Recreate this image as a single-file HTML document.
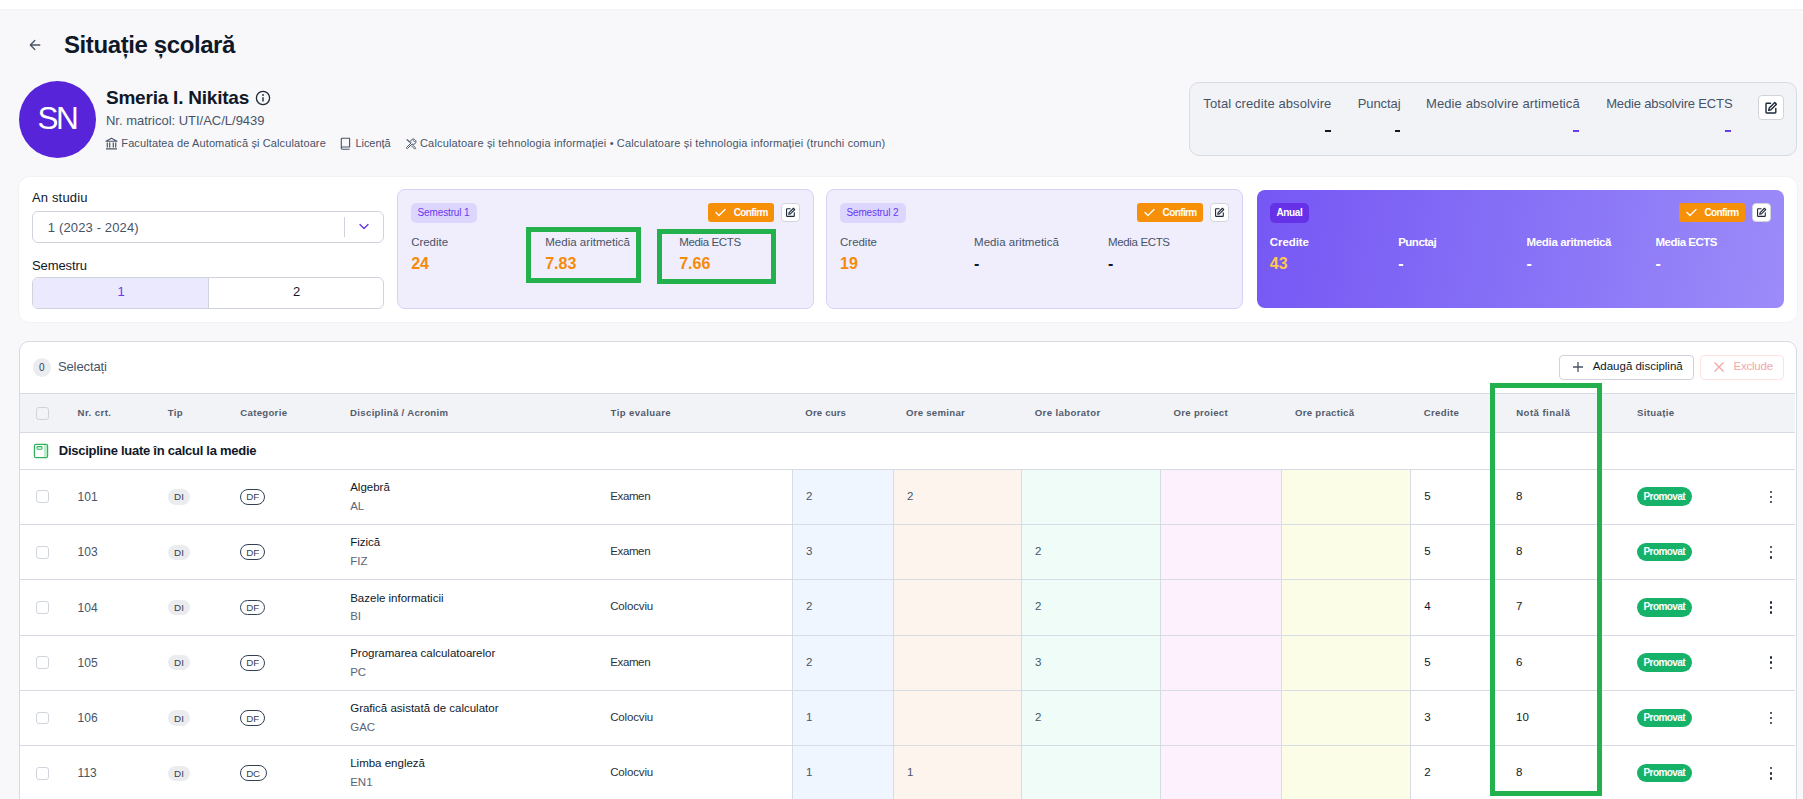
<!DOCTYPE html>
<html><head><meta charset="utf-8"><style>
html,body{margin:0;padding:0;}
body{width:1803px;height:799px;overflow:hidden;position:relative;background:#f8f8fb;font-family:"Liberation Sans",sans-serif;}
body div,body svg{position:absolute;}
.t{white-space:nowrap;}
</style></head><body>
<div style="left:0px;top:0px;width:1803px;height:9px;background:#fff;box-shadow:0 0.5px 0.5px rgba(16,24,40,0.025)"></div>
<svg style="left:29px;top:39px" width="12" height="12" viewBox="0 0 12 12"><path d="M10.8 6H1.5M5.8 1.5L1.3 6l4.5 4.5" fill="none" stroke="#475467" stroke-width="1.3" stroke-linecap="round" stroke-linejoin="round"/></svg>
<div class="t" style="left:64.00px;top:33.48px;font-size:24px;line-height:24px;color:#101828;font-weight:bold;letter-spacing:-0.401px;">Situație școlară</div>
<div style="left:19px;top:81px;width:77px;height:77px;background:#5724d9;border-radius:50%"></div>
<div class="t" style="left:37.60px;top:102.74px;font-size:31.5px;line-height:31.5px;color:#fff;letter-spacing:-2.529px;">SN</div>
<div class="t" style="left:106.00px;top:87.52px;font-size:19px;line-height:19px;color:#101828;font-weight:bold;letter-spacing:-0.223px;">Smeria I. Nikitas</div>
<svg style="left:255px;top:90px" width="16" height="16" viewBox="0 0 16 16"><circle cx="8" cy="8" r="6.6" fill="none" stroke="#1d2939" stroke-width="1.3"/><circle cx="8" cy="5" r="0.9" fill="#1d2939"/><path d="M8 7.2v4.3" stroke="#1d2939" stroke-width="1.4"/></svg>
<div class="t" style="left:106.00px;top:114.00px;font-size:13px;line-height:13px;color:#475467;letter-spacing:-0.016px;">Nr. matricol: UTI/AC/L/9439</div>
<svg style="left:105px;top:137px" width="13" height="13" viewBox="0 0 13 13"><path d="M1 4.2L6.5 1.3 12 4.2z" fill="none" stroke="#475467" stroke-width="1.1" stroke-linejoin="round"/><path d="M2.3 5.5v5M4.7 5.5v5M8.3 5.5v5M10.7 5.5v5M1 11.8h11" stroke="#475467" stroke-width="1.2"/></svg>
<div class="t" style="left:121.30px;top:137.99px;font-size:11px;line-height:11px;color:#475467;letter-spacing:0.116px;">Facultatea de Automatică și Calculatoare</div>
<svg style="left:339px;top:137px" width="13" height="13" viewBox="0 0 13 13"><path d="M2.3 11.2V2.2c0-.6.4-1 1-1h7.3v8.8H3.3c-.6 0-1 .5-1 1.1s.4 1.1 1 1.1h7.3" fill="none" stroke="#475467" stroke-width="1.1" stroke-linejoin="round"/></svg>
<div class="t" style="left:355.50px;top:137.99px;font-size:11px;line-height:11px;color:#475467;letter-spacing:-0.067px;">Licență</div>
<svg style="left:404.5px;top:138.3px" width="12" height="12" viewBox="0 0 12 12"><path d="M1.6 9.4L6 5A2.7 2.7 0 0 1 9.6 1.3L8.3 2.6 9.4 3.7 10.7 2.4A2.7 2.7 0 0 1 7 6L2.6 10.4A.7.7 0 0 1 1.6 9.4z" fill="none" stroke="#475467" stroke-width=".95" stroke-linejoin="round"/><path d="M1.2 1.9l.7-.7 1 .4 2.4 2.4-.8.8L2.1 2.4z" fill="#475467"/><path d="M7.4 6.6l3.1 3.1a.8.8 0 0 1-1.1 1.1L6.3 7.7" fill="none" stroke="#475467" stroke-width=".95" stroke-linejoin="round"/></svg>
<div class="t" style="left:420.00px;top:137.99px;font-size:11px;line-height:11px;color:#475467;letter-spacing:0.159px;">Calculatoare și tehnologia informației • Calculatoare și tehnologia informației (trunchi comun)</div>
<div style="left:1189px;top:82px;width:608px;height:74px;background:#f2f3f7;border:1px solid #d7dbe3;border-radius:10px;box-sizing:border-box"></div>
<div class="t" style="left:1203.30px;top:97.30px;font-size:13px;line-height:13px;color:#475467;letter-spacing:0.103px;">Total credite absolvire</div>
<div class="t" style="left:1357.70px;top:97.30px;font-size:13px;line-height:13px;color:#475467;letter-spacing:-0.080px;">Punctaj</div>
<div class="t" style="left:1426.00px;top:97.30px;font-size:13px;line-height:13px;color:#475467;letter-spacing:0.108px;">Medie absolvire artimetică</div>
<div class="t" style="left:1606.20px;top:97.30px;font-size:13px;line-height:13px;color:#475467;letter-spacing:-0.156px;">Medie absolvire ECTS</div>
<div style="left:1324.8px;top:129.5px;width:5.8px;height:2px;background:#101828"></div>
<div style="left:1394.7px;top:129.5px;width:5.8px;height:2px;background:#101828"></div>
<div style="left:1572.8px;top:129.5px;width:6.2px;height:2px;background:#6938ef"></div>
<div style="left:1725px;top:129.5px;width:6.3px;height:2px;background:#6938ef"></div>
<div style="left:1758px;top:95px;width:25.5px;height:25.2px;background:#fff;border:1px solid #d0d5dd;border-radius:4px;box-sizing:border-box"><svg width="14" height="14" viewBox="0 0 16 16" style="position:absolute;left:4.75px;top:4.6px"><path d="M7.5 2.5H3.2c-.5 0-.9.4-.9.9v9.4c0 .5.4.9.9.9h9.4c.5 0 .9-.4.9-.9V8.5" fill="none" stroke="#1d2939" stroke-width="1.6" stroke-linecap="round"/><path d="M12.3 1.8l1.9 1.9-6.3 6.3-2.5.6.6-2.5z" fill="none" stroke="#1d2939" stroke-width="1.6" stroke-linejoin="round"/></svg></div>
<div style="left:19px;top:177px;width:1777.8px;height:145.3px;background:#fff;border-radius:10px;box-shadow:0 0 0 0.6px rgba(16,24,40,0.045)"></div>
<div class="t" style="left:31.90px;top:191.10px;font-size:13px;line-height:13px;color:#101828;letter-spacing:0.178px;">An studiu</div>
<div style="left:32px;top:211px;width:352px;height:32px;border:1px solid #cfd4dc;border-radius:6px;box-sizing:border-box;background:#fff"></div>
<div class="t" style="left:47.80px;top:221.20px;font-size:13px;line-height:13px;color:#475467;letter-spacing:0.141px;">1 (2023 - 2024)</div>
<div style="left:344px;top:217.3px;width:1px;height:19.6px;background:#cfd4dc"></div>
<svg style="left:358px;top:222px" width="12" height="9" viewBox="0 0 12 9"><path d="M2 2.5l4 4 4-4" fill="none" stroke="#6938ef" stroke-width="1.4" stroke-linecap="round" stroke-linejoin="round"/></svg>
<div class="t" style="left:31.90px;top:258.50px;font-size:13px;line-height:13px;color:#101828;letter-spacing:-0.079px;">Semestru</div>
<div style="left:32px;top:277.4px;width:352.3px;height:31.2px;border:1px solid #cfd4dc;border-radius:6px;box-sizing:border-box;overflow:hidden;background:#fff"><div style="left:0;top:0;width:175px;height:100%;background:#ebe9fd;border-right:1px solid #cfd4dc"></div></div>
<div class="t" style="left:117.60px;top:285.30px;font-size:13px;line-height:13px;color:#6938ef;">1</div>
<div class="t" style="left:293.00px;top:285.30px;font-size:13px;line-height:13px;color:#101828;">2</div>
<div style="left:397.2px;top:189.4px;width:416.5px;height:119.6px;background:#f0edfc;border:1px solid #d8d2f8;border-radius:8px;box-sizing:border-box"></div>
<div style="left:410.9px;top:203.1px;width:65.8px;height:19.6px;background:#dcd6fd;border-radius:5px"></div>
<div class="t" style="left:417.50px;top:207.53px;font-size:10px;line-height:10px;color:#6938ef;letter-spacing:-0.123px;">Semestrul 1</div>
<div style="left:708.2px;top:203px;width:66px;height:19px;background:#f79009;border-radius:3px"><svg style="left:7px;top:5px" width="11" height="9" viewBox="0 0 11 9"><path d="M1 4.5l3 3L10 1.5" fill="none" stroke="#fff" stroke-width="1.3" stroke-linecap="round" stroke-linejoin="round"/></svg></div>
<div class="t" style="left:733.70px;top:207.73px;font-size:10px;line-height:10px;color:#fff;font-weight:bold;letter-spacing:-0.619px;">Confirm</div>
<div style="left:781.2px;top:203px;width:18.5px;height:18.5px;background:#fff;border:1px solid #d0d5dd;border-radius:4px;box-sizing:border-box"><svg width="11" height="11" viewBox="0 0 16 16" style="position:absolute;left:2.75px;top:2.75px"><path d="M7.5 2.5H3.2c-.5 0-.9.4-.9.9v9.4c0 .5.4.9.9.9h9.4c.5 0 .9-.4.9-.9V8.5" fill="none" stroke="#1d2939" stroke-width="1.6" stroke-linecap="round"/><path d="M12.3 1.8l1.9 1.9-6.3 6.3-2.5.6.6-2.5z" fill="none" stroke="#1d2939" stroke-width="1.6" stroke-linejoin="round"/></svg></div>
<div class="t" style="left:411.20px;top:237.27px;font-size:11.5px;line-height:11.5px;color:#475467;letter-spacing:-0.039px;">Credite</div>
<div class="t" style="left:411.20px;top:256.46px;font-size:16px;line-height:16px;color:#f58a07;font-weight:bold;">24</div>
<div class="t" style="left:545.20px;top:237.27px;font-size:11.5px;line-height:11.5px;color:#475467;letter-spacing:0.027px;">Media aritmetică</div>
<div class="t" style="left:545.20px;top:256.46px;font-size:16px;line-height:16px;color:#f58a07;font-weight:bold;">7.83</div>
<div class="t" style="left:679.20px;top:237.27px;font-size:11.5px;line-height:11.5px;color:#475467;letter-spacing:-0.369px;">Media ECTS</div>
<div class="t" style="left:679.20px;top:256.46px;font-size:16px;line-height:16px;color:#f58a07;font-weight:bold;">7.66</div>
<div style="left:826.1px;top:189.4px;width:416.5px;height:119.6px;background:#f0edfc;border:1px solid #d8d2f8;border-radius:8px;box-sizing:border-box"></div>
<div style="left:839.8000000000001px;top:203.1px;width:65.8px;height:19.6px;background:#dcd6fd;border-radius:5px"></div>
<div class="t" style="left:846.40px;top:207.53px;font-size:10px;line-height:10px;color:#6938ef;letter-spacing:-0.123px;">Semestrul 2</div>
<div style="left:1137.1px;top:203px;width:66px;height:19px;background:#f79009;border-radius:3px"><svg style="left:7px;top:5px" width="11" height="9" viewBox="0 0 11 9"><path d="M1 4.5l3 3L10 1.5" fill="none" stroke="#fff" stroke-width="1.3" stroke-linecap="round" stroke-linejoin="round"/></svg></div>
<div class="t" style="left:1162.60px;top:207.73px;font-size:10px;line-height:10px;color:#fff;font-weight:bold;letter-spacing:-0.619px;">Confirm</div>
<div style="left:1210.1px;top:203px;width:18.5px;height:18.5px;background:#fff;border:1px solid #d0d5dd;border-radius:4px;box-sizing:border-box"><svg width="11" height="11" viewBox="0 0 16 16" style="position:absolute;left:2.75px;top:2.75px"><path d="M7.5 2.5H3.2c-.5 0-.9.4-.9.9v9.4c0 .5.4.9.9.9h9.4c.5 0 .9-.4.9-.9V8.5" fill="none" stroke="#1d2939" stroke-width="1.6" stroke-linecap="round"/><path d="M12.3 1.8l1.9 1.9-6.3 6.3-2.5.6.6-2.5z" fill="none" stroke="#1d2939" stroke-width="1.6" stroke-linejoin="round"/></svg></div>
<div class="t" style="left:840.10px;top:237.27px;font-size:11.5px;line-height:11.5px;color:#475467;letter-spacing:-0.039px;">Credite</div>
<div class="t" style="left:840.10px;top:256.46px;font-size:16px;line-height:16px;color:#f58a07;font-weight:bold;">19</div>
<div class="t" style="left:974.10px;top:237.27px;font-size:11.5px;line-height:11.5px;color:#475467;letter-spacing:0.027px;">Media aritmetică</div>
<div class="t" style="left:974.10px;top:256.46px;font-size:16px;line-height:16px;color:#101828;font-weight:bold;">-</div>
<div class="t" style="left:1108.10px;top:237.27px;font-size:11.5px;line-height:11.5px;color:#475467;letter-spacing:-0.369px;">Media ECTS</div>
<div class="t" style="left:1108.10px;top:256.46px;font-size:16px;line-height:16px;color:#101828;font-weight:bold;">-</div>
<div style="left:1256.8px;top:189.9px;width:527.6px;height:118px;background:linear-gradient(100deg,#7657f4 0%,#8a76f7 60%,#9c8cf9 100%);border-radius:8px"></div>
<div style="left:1270px;top:203.1px;width:39px;height:19.5px;background:#6532e8;border-radius:5px"></div>
<div class="t" style="left:1276.50px;top:207.53px;font-size:10px;line-height:10px;color:#fff;font-weight:bold;letter-spacing:-0.356px;">Anual</div>
<div style="left:1679px;top:203px;width:66px;height:19px;background:#f79009;border-radius:3px"><svg style="left:7px;top:5px" width="11" height="9" viewBox="0 0 11 9"><path d="M1 4.5l3 3L10 1.5" fill="none" stroke="#fff" stroke-width="1.3" stroke-linecap="round" stroke-linejoin="round"/></svg></div>
<div class="t" style="left:1704.50px;top:207.73px;font-size:10px;line-height:10px;color:#fff;font-weight:bold;letter-spacing:-0.619px;">Confirm</div>
<div style="left:1752px;top:203px;width:18.5px;height:18.5px;background:#fff;border:1px solid #d0d5dd;border-radius:4px;box-sizing:border-box"><svg width="11" height="11" viewBox="0 0 16 16" style="position:absolute;left:2.75px;top:2.75px"><path d="M7.5 2.5H3.2c-.5 0-.9.4-.9.9v9.4c0 .5.4.9.9.9h9.4c.5 0 .9-.4.9-.9V8.5" fill="none" stroke="#1d2939" stroke-width="1.6" stroke-linecap="round"/><path d="M12.3 1.8l1.9 1.9-6.3 6.3-2.5.6.6-2.5z" fill="none" stroke="#1d2939" stroke-width="1.6" stroke-linejoin="round"/></svg></div>
<div class="t" style="left:1269.80px;top:237.27px;font-size:11.5px;line-height:11.5px;color:#fff;font-weight:bold;letter-spacing:-0.089px;">Credite</div>
<div class="t" style="left:1269.80px;top:256.46px;font-size:16px;line-height:16px;color:#fec84b;font-weight:bold;">43</div>
<div class="t" style="left:1398.20px;top:237.27px;font-size:11.5px;line-height:11.5px;color:#fff;font-weight:bold;letter-spacing:-0.505px;">Punctaj</div>
<div class="t" style="left:1398.20px;top:256.46px;font-size:16px;line-height:16px;color:#fff;font-weight:bold;">-</div>
<div class="t" style="left:1526.60px;top:237.27px;font-size:11.5px;line-height:11.5px;color:#fff;font-weight:bold;letter-spacing:-0.351px;">Media aritmetică</div>
<div class="t" style="left:1526.60px;top:256.46px;font-size:16px;line-height:16px;color:#fff;font-weight:bold;">-</div>
<div class="t" style="left:1655.40px;top:237.27px;font-size:11.5px;line-height:11.5px;color:#fff;font-weight:bold;letter-spacing:-0.486px;">Media ECTS</div>
<div class="t" style="left:1655.40px;top:256.46px;font-size:16px;line-height:16px;color:#fff;font-weight:bold;">-</div>
<div style="left:526px;top:227.1px;width:114.8px;height:55.5px;border:5px solid #22b14c;box-sizing:border-box"></div>
<div style="left:657.1px;top:229.2px;width:118.6px;height:54.5px;border:5px solid #22b14c;box-sizing:border-box"></div>
<div style="left:19.4px;top:341.3px;width:1777.6px;height:500px;background:#fff;border:1px solid #d7dbe3;border-radius:10px;box-sizing:border-box"></div>
<div style="left:33px;top:358.2px;width:18.4px;height:18.4px;background:#eaecf0;border-radius:50%"></div>
<div class="t" style="left:39.00px;top:362.74px;font-size:10px;line-height:10px;color:#344054;">0</div>
<div class="t" style="left:57.90px;top:360.30px;font-size:13px;line-height:13px;color:#475467;letter-spacing:-0.096px;">Selectați</div>
<div style="left:1559.4px;top:355px;width:134.5px;height:25px;border:1px solid #cfd4dc;border-radius:4px;box-sizing:border-box;background:#fff"></div>
<svg style="left:1572px;top:361px" width="12" height="12" viewBox="0 0 12 12"><path d="M6 1v10M1 6h10" stroke="#475467" stroke-width="1.3"/></svg>
<div class="t" style="left:1592.70px;top:361.27px;font-size:11.5px;line-height:11.5px;color:#101828;letter-spacing:-0.009px;">Adaugă disciplină</div>
<div style="left:1700.2px;top:355px;width:83.6px;height:25px;border:1px solid #fde2e2;border-radius:4px;box-sizing:border-box;background:#fff"></div>
<svg style="left:1713px;top:361px" width="12" height="12" viewBox="0 0 12 12"><path d="M1.5 1.5l9 9M10.5 1.5l-9 9" stroke="#f4a3a3" stroke-width="1.2"/></svg>
<div class="t" style="left:1733.50px;top:361.27px;font-size:11.5px;line-height:11.5px;color:#f3a7a7;letter-spacing:-0.230px;">Exclude</div>
<div style="left:20.4px;top:393.3px;width:1775px;height:40px;background:#f2f3f7;border-top:1px solid #d7dbe3;border-bottom:1px solid #d7dbe3;box-sizing:border-box"></div>
<div style="left:36.3px;top:407.3px;width:12.4px;height:12.4px;border:1px solid #cfd4dc;border-radius:3px;box-sizing:border-box"></div>
<div class="t" style="left:77.60px;top:408.47px;font-size:9.6px;line-height:9.6px;color:#535c6d;font-weight:bold;letter-spacing:0.423px;">Nr. crt.</div>
<div class="t" style="left:167.70px;top:408.47px;font-size:9.6px;line-height:9.6px;color:#535c6d;font-weight:bold;letter-spacing:0.359px;">Tip</div>
<div class="t" style="left:240.30px;top:408.47px;font-size:9.6px;line-height:9.6px;color:#535c6d;font-weight:bold;letter-spacing:0.302px;">Categorie</div>
<div class="t" style="left:350.10px;top:408.47px;font-size:9.6px;line-height:9.6px;color:#535c6d;font-weight:bold;letter-spacing:0.318px;">Disciplină / Acronim</div>
<div class="t" style="left:610.60px;top:408.47px;font-size:9.6px;line-height:9.6px;color:#535c6d;font-weight:bold;letter-spacing:0.379px;">Tip evaluare</div>
<div class="t" style="left:805.30px;top:408.47px;font-size:9.6px;line-height:9.6px;color:#535c6d;font-weight:bold;letter-spacing:0.164px;">Ore curs</div>
<div class="t" style="left:905.90px;top:408.47px;font-size:9.6px;line-height:9.6px;color:#535c6d;font-weight:bold;letter-spacing:0.288px;">Ore seminar</div>
<div class="t" style="left:1034.70px;top:408.47px;font-size:9.6px;line-height:9.6px;color:#535c6d;font-weight:bold;letter-spacing:0.391px;">Ore laborator</div>
<div class="t" style="left:1173.50px;top:408.47px;font-size:9.6px;line-height:9.6px;color:#535c6d;font-weight:bold;letter-spacing:0.299px;">Ore proiect</div>
<div class="t" style="left:1294.90px;top:408.47px;font-size:9.6px;line-height:9.6px;color:#535c6d;font-weight:bold;letter-spacing:0.289px;">Ore practică</div>
<div class="t" style="left:1423.70px;top:408.47px;font-size:9.6px;line-height:9.6px;color:#535c6d;font-weight:bold;letter-spacing:0.346px;">Credite</div>
<div class="t" style="left:1516.20px;top:408.47px;font-size:9.6px;line-height:9.6px;color:#535c6d;font-weight:bold;letter-spacing:0.457px;">Notă finală</div>
<div class="t" style="left:1636.90px;top:408.47px;font-size:9.6px;line-height:9.6px;color:#535c6d;font-weight:bold;letter-spacing:0.366px;">Situație</div>
<svg style="left:33px;top:443px" width="16" height="16" viewBox="0 0 16 16"><rect x="1.4" y="1.4" width="13.2" height="13.2" rx="1.6" fill="#fff" stroke="#2eb35a" stroke-width="1.2"/><rect x="11" y="2" width="3" height="12" fill="#b9ecc9"/><rect x="4" y="3.6" width="5" height="2.6" rx=".6" fill="none" stroke="#2eb35a" stroke-width="1.1"/></svg>
<div class="t" style="left:58.80px;top:443.80px;font-size:13px;line-height:13px;color:#101828;font-weight:bold;letter-spacing:-0.261px;">Discipline luate în calcul la medie</div>
<div style="left:792.4px;top:469.3px;width:618.0000000000001px;height:329.7px;"></div>
<div style="left:792.4px;top:469.3px;width:101.0px;height:400px;background:#eff6ff"></div>
<div style="left:893.4px;top:469.3px;width:128.10000000000002px;height:400px;background:#fef4ee"></div>
<div style="left:1021.5px;top:469.3px;width:138.9000000000001px;height:400px;background:#effcf7"></div>
<div style="left:1160.4px;top:469.3px;width:121.09999999999991px;height:400px;background:#fdf1fe"></div>
<div style="left:1281.5px;top:469.3px;width:128.9000000000001px;height:400px;background:#fbfde7"></div>
<div style="left:791.9px;top:469.3px;width:1px;height:400px;background:#d7dbe3"></div>
<div style="left:892.9px;top:469.3px;width:1px;height:400px;background:#d7dbe3"></div>
<div style="left:1021.0px;top:469.3px;width:1px;height:400px;background:#d7dbe3"></div>
<div style="left:1159.9px;top:469.3px;width:1px;height:400px;background:#d7dbe3"></div>
<div style="left:1281.0px;top:469.3px;width:1px;height:400px;background:#d7dbe3"></div>
<div style="left:1409.9px;top:469.3px;width:1px;height:400px;background:#d7dbe3"></div>
<div style="left:36.1px;top:490.435px;width:12.8px;height:12.8px;border:1px solid #d0d5dd;border-radius:3px;box-sizing:border-box;background:#fff"></div>
<div class="t" style="left:77.60px;top:491.08px;font-size:12px;line-height:12px;color:#475467;">101</div>
<div style="left:168px;top:489.335px;width:21.8px;height:15.3px;background:#eaecf0;border-radius:8px"></div>
<div class="t" style="left:174.00px;top:492.44px;font-size:9.8px;line-height:9.8px;color:#344054;letter-spacing:0.250px;">DI</div>
<div style="left:240px;top:489.135px;width:24.8px;height:15.6px;border:1px solid #344054;border-radius:8px;box-sizing:border-box"></div>
<div class="t" style="left:246.30px;top:492.44px;font-size:9.8px;line-height:9.8px;color:#344054;letter-spacing:-0.132px;">DF</div>
<div class="t" style="left:350.20px;top:482.07px;font-size:11.5px;line-height:11.5px;color:#101828;">Algebră</div>
<div class="t" style="left:350.20px;top:500.87px;font-size:11.5px;line-height:11.5px;color:#5b6577;">AL</div>
<div class="t" style="left:610.20px;top:490.80px;font-size:11.5px;line-height:11.5px;color:#2a3242;letter-spacing:-0.365px;">Examen</div>
<div class="t" style="left:806.00px;top:490.80px;font-size:11.5px;line-height:11.5px;color:#475467;">2</div>
<div class="t" style="left:907.00px;top:490.80px;font-size:11.5px;line-height:11.5px;color:#475467;">2</div>
<div class="t" style="left:1424.30px;top:490.80px;font-size:11.5px;line-height:11.5px;color:#101828;">5</div>
<div class="t" style="left:1516.00px;top:490.80px;font-size:11.5px;line-height:11.5px;color:#101828;">8</div>
<div style="left:1637px;top:487.435px;width:54.7px;height:18.7px;background:#17b26a;border-radius:10px"></div>
<div class="t" style="left:1643.50px;top:491.77px;font-size:10px;line-height:10px;color:#fff;font-weight:bold;letter-spacing:-0.578px;">Promovat</div>
<div style="left:1769.8px;top:490.53499999999997px;width:2.6px;height:2.6px;background:#1d2939;border-radius:50%"></div>
<div style="left:1769.8px;top:495.635px;width:2.6px;height:2.6px;background:#1d2939;border-radius:50%"></div>
<div style="left:1769.8px;top:500.735px;width:2.6px;height:2.6px;background:#1d2939;border-radius:50%"></div>
<div style="left:36.1px;top:545.705px;width:12.8px;height:12.8px;border:1px solid #d0d5dd;border-radius:3px;box-sizing:border-box;background:#fff"></div>
<div class="t" style="left:77.60px;top:546.35px;font-size:12px;line-height:12px;color:#475467;">103</div>
<div style="left:168px;top:544.605px;width:21.8px;height:15.3px;background:#eaecf0;border-radius:8px"></div>
<div class="t" style="left:174.00px;top:547.71px;font-size:9.8px;line-height:9.8px;color:#344054;letter-spacing:0.250px;">DI</div>
<div style="left:240px;top:544.4050000000001px;width:24.8px;height:15.6px;border:1px solid #344054;border-radius:8px;box-sizing:border-box"></div>
<div class="t" style="left:246.30px;top:547.71px;font-size:9.8px;line-height:9.8px;color:#344054;letter-spacing:-0.132px;">DF</div>
<div class="t" style="left:350.20px;top:537.34px;font-size:11.5px;line-height:11.5px;color:#101828;">Fizică</div>
<div class="t" style="left:350.20px;top:556.14px;font-size:11.5px;line-height:11.5px;color:#5b6577;">FIZ</div>
<div class="t" style="left:610.20px;top:546.07px;font-size:11.5px;line-height:11.5px;color:#2a3242;letter-spacing:-0.365px;">Examen</div>
<div class="t" style="left:806.00px;top:546.07px;font-size:11.5px;line-height:11.5px;color:#475467;">3</div>
<div class="t" style="left:1035.00px;top:546.07px;font-size:11.5px;line-height:11.5px;color:#475467;">2</div>
<div class="t" style="left:1424.30px;top:546.07px;font-size:11.5px;line-height:11.5px;color:#101828;">5</div>
<div class="t" style="left:1516.00px;top:546.07px;font-size:11.5px;line-height:11.5px;color:#101828;">8</div>
<div style="left:1637px;top:542.705px;width:54.7px;height:18.7px;background:#17b26a;border-radius:10px"></div>
<div class="t" style="left:1643.50px;top:547.04px;font-size:10px;line-height:10px;color:#fff;font-weight:bold;letter-spacing:-0.578px;">Promovat</div>
<div style="left:1769.8px;top:545.8050000000001px;width:2.6px;height:2.6px;background:#1d2939;border-radius:50%"></div>
<div style="left:1769.8px;top:550.9050000000001px;width:2.6px;height:2.6px;background:#1d2939;border-radius:50%"></div>
<div style="left:1769.8px;top:556.0050000000001px;width:2.6px;height:2.6px;background:#1d2939;border-radius:50%"></div>
<div style="left:36.1px;top:600.975px;width:12.8px;height:12.8px;border:1px solid #d0d5dd;border-radius:3px;box-sizing:border-box;background:#fff"></div>
<div class="t" style="left:77.60px;top:601.62px;font-size:12px;line-height:12px;color:#475467;">104</div>
<div style="left:168px;top:599.875px;width:21.8px;height:15.3px;background:#eaecf0;border-radius:8px"></div>
<div class="t" style="left:174.00px;top:602.98px;font-size:9.8px;line-height:9.8px;color:#344054;letter-spacing:0.250px;">DI</div>
<div style="left:240px;top:599.6750000000001px;width:24.8px;height:15.6px;border:1px solid #344054;border-radius:8px;box-sizing:border-box"></div>
<div class="t" style="left:246.30px;top:602.98px;font-size:9.8px;line-height:9.8px;color:#344054;letter-spacing:-0.132px;">DF</div>
<div class="t" style="left:350.20px;top:592.61px;font-size:11.5px;line-height:11.5px;color:#101828;">Bazele informaticii</div>
<div class="t" style="left:350.20px;top:611.41px;font-size:11.5px;line-height:11.5px;color:#5b6577;">BI</div>
<div class="t" style="left:610.20px;top:601.34px;font-size:11.5px;line-height:11.5px;color:#2a3242;letter-spacing:-0.150px;">Colocviu</div>
<div class="t" style="left:806.00px;top:601.34px;font-size:11.5px;line-height:11.5px;color:#475467;">2</div>
<div class="t" style="left:1035.00px;top:601.34px;font-size:11.5px;line-height:11.5px;color:#475467;">2</div>
<div class="t" style="left:1424.30px;top:601.34px;font-size:11.5px;line-height:11.5px;color:#101828;">4</div>
<div class="t" style="left:1516.00px;top:601.34px;font-size:11.5px;line-height:11.5px;color:#101828;">7</div>
<div style="left:1637px;top:597.975px;width:54.7px;height:18.7px;background:#17b26a;border-radius:10px"></div>
<div class="t" style="left:1643.50px;top:602.31px;font-size:10px;line-height:10px;color:#fff;font-weight:bold;letter-spacing:-0.578px;">Promovat</div>
<div style="left:1769.8px;top:601.075px;width:2.6px;height:2.6px;background:#1d2939;border-radius:50%"></div>
<div style="left:1769.8px;top:606.1750000000001px;width:2.6px;height:2.6px;background:#1d2939;border-radius:50%"></div>
<div style="left:1769.8px;top:611.2750000000001px;width:2.6px;height:2.6px;background:#1d2939;border-radius:50%"></div>
<div style="left:36.1px;top:656.245px;width:12.8px;height:12.8px;border:1px solid #d0d5dd;border-radius:3px;box-sizing:border-box;background:#fff"></div>
<div class="t" style="left:77.60px;top:656.89px;font-size:12px;line-height:12px;color:#475467;">105</div>
<div style="left:168px;top:655.145px;width:21.8px;height:15.3px;background:#eaecf0;border-radius:8px"></div>
<div class="t" style="left:174.00px;top:658.25px;font-size:9.8px;line-height:9.8px;color:#344054;letter-spacing:0.250px;">DI</div>
<div style="left:240px;top:654.945px;width:24.8px;height:15.6px;border:1px solid #344054;border-radius:8px;box-sizing:border-box"></div>
<div class="t" style="left:246.30px;top:658.25px;font-size:9.8px;line-height:9.8px;color:#344054;letter-spacing:-0.132px;">DF</div>
<div class="t" style="left:350.20px;top:647.88px;font-size:11.5px;line-height:11.5px;color:#101828;">Programarea calculatoarelor</div>
<div class="t" style="left:350.20px;top:666.68px;font-size:11.5px;line-height:11.5px;color:#5b6577;">PC</div>
<div class="t" style="left:610.20px;top:656.61px;font-size:11.5px;line-height:11.5px;color:#2a3242;letter-spacing:-0.365px;">Examen</div>
<div class="t" style="left:806.00px;top:656.61px;font-size:11.5px;line-height:11.5px;color:#475467;">2</div>
<div class="t" style="left:1035.00px;top:656.61px;font-size:11.5px;line-height:11.5px;color:#475467;">3</div>
<div class="t" style="left:1424.30px;top:656.61px;font-size:11.5px;line-height:11.5px;color:#101828;">5</div>
<div class="t" style="left:1516.00px;top:656.61px;font-size:11.5px;line-height:11.5px;color:#101828;">6</div>
<div style="left:1637px;top:653.245px;width:54.7px;height:18.7px;background:#17b26a;border-radius:10px"></div>
<div class="t" style="left:1643.50px;top:657.58px;font-size:10px;line-height:10px;color:#fff;font-weight:bold;letter-spacing:-0.578px;">Promovat</div>
<div style="left:1769.8px;top:656.345px;width:2.6px;height:2.6px;background:#1d2939;border-radius:50%"></div>
<div style="left:1769.8px;top:661.445px;width:2.6px;height:2.6px;background:#1d2939;border-radius:50%"></div>
<div style="left:1769.8px;top:666.5450000000001px;width:2.6px;height:2.6px;background:#1d2939;border-radius:50%"></div>
<div style="left:36.1px;top:711.515px;width:12.8px;height:12.8px;border:1px solid #d0d5dd;border-radius:3px;box-sizing:border-box;background:#fff"></div>
<div class="t" style="left:77.60px;top:712.16px;font-size:12px;line-height:12px;color:#475467;">106</div>
<div style="left:168px;top:710.415px;width:21.8px;height:15.3px;background:#eaecf0;border-radius:8px"></div>
<div class="t" style="left:174.00px;top:713.52px;font-size:9.8px;line-height:9.8px;color:#344054;letter-spacing:0.250px;">DI</div>
<div style="left:240px;top:710.215px;width:24.8px;height:15.6px;border:1px solid #344054;border-radius:8px;box-sizing:border-box"></div>
<div class="t" style="left:246.30px;top:713.52px;font-size:9.8px;line-height:9.8px;color:#344054;letter-spacing:-0.132px;">DF</div>
<div class="t" style="left:350.20px;top:703.15px;font-size:11.5px;line-height:11.5px;color:#101828;">Grafică asistată de calculator</div>
<div class="t" style="left:350.20px;top:721.95px;font-size:11.5px;line-height:11.5px;color:#5b6577;">GAC</div>
<div class="t" style="left:610.20px;top:711.88px;font-size:11.5px;line-height:11.5px;color:#2a3242;letter-spacing:-0.150px;">Colocviu</div>
<div class="t" style="left:806.00px;top:711.88px;font-size:11.5px;line-height:11.5px;color:#475467;">1</div>
<div class="t" style="left:1035.00px;top:711.88px;font-size:11.5px;line-height:11.5px;color:#475467;">2</div>
<div class="t" style="left:1424.30px;top:711.88px;font-size:11.5px;line-height:11.5px;color:#101828;">3</div>
<div class="t" style="left:1516.00px;top:711.88px;font-size:11.5px;line-height:11.5px;color:#101828;">10</div>
<div style="left:1637px;top:708.515px;width:54.7px;height:18.7px;background:#17b26a;border-radius:10px"></div>
<div class="t" style="left:1643.50px;top:712.85px;font-size:10px;line-height:10px;color:#fff;font-weight:bold;letter-spacing:-0.578px;">Promovat</div>
<div style="left:1769.8px;top:711.615px;width:2.6px;height:2.6px;background:#1d2939;border-radius:50%"></div>
<div style="left:1769.8px;top:716.715px;width:2.6px;height:2.6px;background:#1d2939;border-radius:50%"></div>
<div style="left:1769.8px;top:721.815px;width:2.6px;height:2.6px;background:#1d2939;border-radius:50%"></div>
<div style="left:36.1px;top:766.7850000000001px;width:12.8px;height:12.8px;border:1px solid #d0d5dd;border-radius:3px;box-sizing:border-box;background:#fff"></div>
<div class="t" style="left:77.60px;top:767.43px;font-size:12px;line-height:12px;color:#475467;">113</div>
<div style="left:168px;top:765.6850000000001px;width:21.8px;height:15.3px;background:#eaecf0;border-radius:8px"></div>
<div class="t" style="left:174.00px;top:768.79px;font-size:9.8px;line-height:9.8px;color:#344054;letter-spacing:0.250px;">DI</div>
<div style="left:240px;top:765.4850000000001px;width:26.5px;height:15.6px;border:1px solid #344054;border-radius:8px;box-sizing:border-box"></div>
<div class="t" style="left:246.30px;top:768.79px;font-size:9.8px;line-height:9.8px;color:#344054;letter-spacing:-0.277px;">DC</div>
<div class="t" style="left:350.20px;top:758.42px;font-size:11.5px;line-height:11.5px;color:#101828;">Limba engleză</div>
<div class="t" style="left:350.20px;top:777.22px;font-size:11.5px;line-height:11.5px;color:#5b6577;">EN1</div>
<div class="t" style="left:610.20px;top:767.15px;font-size:11.5px;line-height:11.5px;color:#2a3242;letter-spacing:-0.150px;">Colocviu</div>
<div class="t" style="left:806.00px;top:767.15px;font-size:11.5px;line-height:11.5px;color:#475467;">1</div>
<div class="t" style="left:907.00px;top:767.15px;font-size:11.5px;line-height:11.5px;color:#475467;">1</div>
<div class="t" style="left:1424.30px;top:767.15px;font-size:11.5px;line-height:11.5px;color:#101828;">2</div>
<div class="t" style="left:1516.00px;top:767.15px;font-size:11.5px;line-height:11.5px;color:#101828;">8</div>
<div style="left:1637px;top:763.7850000000001px;width:54.7px;height:18.7px;background:#17b26a;border-radius:10px"></div>
<div class="t" style="left:1643.50px;top:768.12px;font-size:10px;line-height:10px;color:#fff;font-weight:bold;letter-spacing:-0.578px;">Promovat</div>
<div style="left:1769.8px;top:766.8850000000001px;width:2.6px;height:2.6px;background:#1d2939;border-radius:50%"></div>
<div style="left:1769.8px;top:771.9850000000001px;width:2.6px;height:2.6px;background:#1d2939;border-radius:50%"></div>
<div style="left:1769.8px;top:777.0850000000002px;width:2.6px;height:2.6px;background:#1d2939;border-radius:50%"></div>
<div style="left:20.4px;top:468.8px;width:1775px;height:1px;background:#d7dbe3"></div>
<div style="left:20.4px;top:524.07px;width:1775px;height:1px;background:#d7dbe3"></div>
<div style="left:20.4px;top:579.34px;width:1775px;height:1px;background:#d7dbe3"></div>
<div style="left:20.4px;top:634.61px;width:1775px;height:1px;background:#d7dbe3"></div>
<div style="left:20.4px;top:689.88px;width:1775px;height:1px;background:#d7dbe3"></div>
<div style="left:20.4px;top:745.1500000000001px;width:1775px;height:1px;background:#d7dbe3"></div>
<div style="left:1490.1px;top:383.2px;width:111.5px;height:413px;border:5px solid #22b14c;box-sizing:border-box"></div>
</body></html>
